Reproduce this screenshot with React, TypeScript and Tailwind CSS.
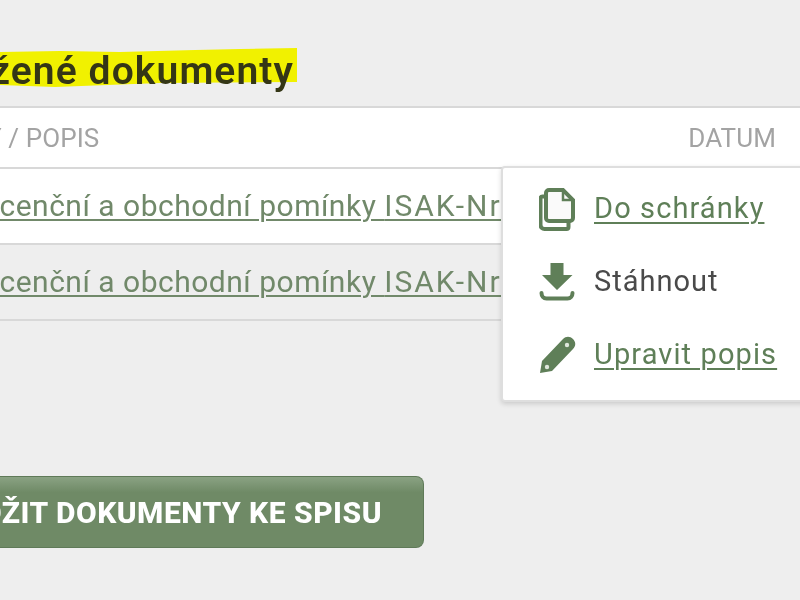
const din = "font-['Roboto',sans-serif]";

function CopyIcon() {
  return (
    <svg width="38" height="44" viewBox="0 0 38 44" className="shrink-0">
      <path d="M10 3h14l10 10v18a3 3 0 0 1-3 3H10a3 3 0 0 1-3-3V6a3 3 0 0 1 3-3z" fill="#fafafa" stroke="#5f7f58" strokeWidth="4" />
      <path d="M24 3v10h10" fill="none" stroke="#5f7f58" strokeWidth="2.500" />
      <path d="M7 9.500H3.500a2 2 0 0 0-2 2V38a4 4 0 0 0 4 4h22a2 2 0 0 0 2-2v-6" fill="none" stroke="#5f7f58" strokeWidth="4" />
    </svg>
  );
}

function DownloadIcon() {
  return (
    <svg width="36" height="38" viewBox="0 0 36 38" className="shrink-0">
      <path d="M11.500 0h13v12h9L18 27 3 12h8.500z" fill="#5f7f58" />
      <path d="M2.500 30c0 3 2 5.500 5 5.500h21c3 0 5-2.500 5-5.500" fill="none" stroke="#5f7f58" strokeWidth="4" strokeLinecap="round" />
    </svg>
  );
}

function PencilIcon() {
  return (
    <svg width="38" height="38" viewBox="0 0 38 38" className="shrink-0">
      <path d="M1 37l2-12L24 3c3-3 7-3 10 0s3 7 0 10L13 35z" fill="#5f7f58" />
      <circle cx="28" cy="9" r="2.200" fill="#dfe7dc" />
      <circle cx="8" cy="31" r="2.200" fill="#dfe7dc" />
    </svg>
  );
}

function MenuItem({ icon, label, link }: { icon: React.ReactNode; label: string; link?: boolean }) {
  return (
    <div className="flex h-[73px] items-center">
      <div className="flex w-[55px] justify-start">{icon}</div>
      <span className={link ? "text-[29px] tracking-[1.1px] text-[#5f7f58] underline underline-offset-[4px] decoration-2" : "text-[29px] tracking-[1px] text-[#4a4a4a]"}>
        {label}
      </span>
    </div>
  );
}

function DocRow({ white }: { white?: boolean }) {
  return (
    <div className={`flex h-[76px] items-center overflow-hidden border-b-2 border-[#d8d8d8] ${white ? "bg-white" : "bg-[#eeeeee]"}`}>
      <a className="-ml-[25px] -mt-[2px] whitespace-nowrap text-[30px] tracking-[0.5px] text-[#71896a] underline underline-offset-[3px] decoration-2">
        Licenční a obchodní pomínky <span className="tracking-[2px]">ISAK-Nr</span>
      </a>
    </div>
  );
}

export default function App() {
  return (
    <div className={`relative h-[600px] w-[800px] overflow-hidden bg-[#eeeeee] blur-[0.6px] ${din}`}>
      <div className="relative h-[106px]">
        <svg width="300" height="50" viewBox="0 0 300 50" className="absolute left-0 top-[45px]">
          <polygon points="0,7 60,6 120,7 195,5 240,4 297,3 297,37 160,38 55,42 0,40" fill="#f1f100" />
        </svg>
        <h2 className="absolute right-[506px] top-[47px] whitespace-nowrap text-[39px] font-semibold leading-[48px] tracking-[1.1px] text-[#343616]">
          Uložené dokumenty
        </h2>
      </div>

      <div className="border-y-2 border-[#d8d8d8] bg-white">
        <div className="flex h-[59px] items-center justify-between pr-[24px] pt-[1px] text-[26px] tracking-[0.1px] text-[#a3a3a3]">
          <span className="-ml-[14px]">Y / POPIS</span>
          <span>DATUM</span>
        </div>
      </div>
      <DocRow white />
      <DocRow />

      <div className="absolute left-[501px] top-[166px] h-[236px] w-[320px] rounded-[4px] border-2 border-[#dedede] bg-white pl-[36px] pt-[4px] shadow-[0_2px_5px_rgba(0,0,0,0.15)]">
        <MenuItem icon={<CopyIcon />} label="Do schránky" link />
        <MenuItem icon={<DownloadIcon />} label="Stáhnout" />
        <MenuItem icon={<PencilIcon />} label="Upravit popis" link />
      </div>

      <div className="mt-[155px] flex h-[72px] w-[424px] items-center justify-end rounded-r-[8px] border border-l-0 border-[#5f7a58] bg-[linear-gradient(#8aa283,#6f8a66_22%)] pr-[41px]">
        <span className="whitespace-nowrap text-[30px] font-extrabold tracking-[0.5px] text-white">ULOŽIT DOKUMENTY KE SPISU</span>
      </div>
    </div>
  );
}
